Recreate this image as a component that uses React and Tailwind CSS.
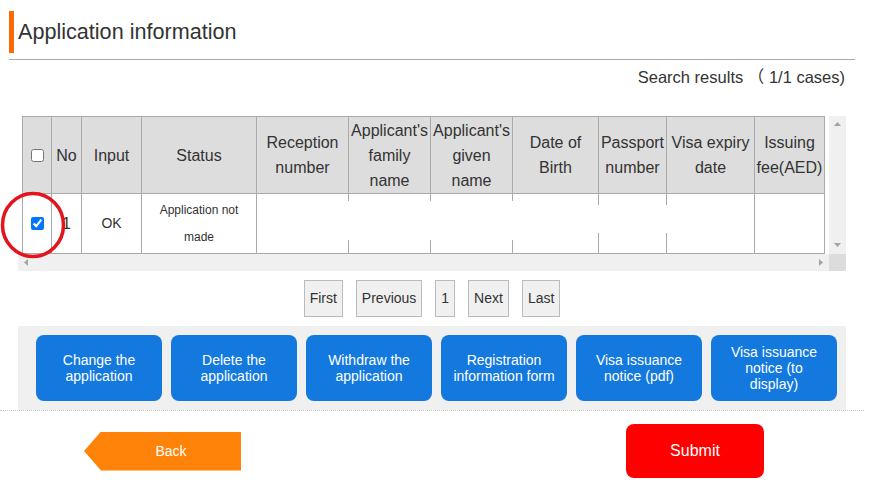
import React from "react";

const gridCls =
  "grid grid-cols-[29px_30px_60px_115px_92px_82px_82px_86px_68px_88px_71px] w-[804px]";

function HeadCell({ children, last }) {
  return (
    <div
      className={
        "border-l border-t border-[#aaa] bg-[#dddddd] h-[77px] flex items-center justify-center text-center text-[16px] leading-[25px] text-[#333] whitespace-nowrap overflow-hidden" +
        (last ? " border-r" : "")
      }
    >
      <div className="flex flex-col items-center">{children}</div>
    </div>
  );
}

function BodyCell({ children, kind = "full", last }) {
  if (kind === "full") {
    return (
      <div
        className={
          "border-l border-t border-b border-[#aaa] bg-white h-[61px] flex items-center justify-center text-center text-[#333]" +
          (last ? " border-r" : "")
        }
      >
        {children}
      </div>
    );
  }
  const top = kind === "a" ? "h-[7px]" : "h-[11px]";
  const bot = kind === "a" ? "h-[13px]" : "h-[20px]";
  return (
    <div className="border-t border-b border-[#aaa] bg-white h-[61px] flex">
      <div className="w-px flex flex-col justify-between">
        <div className={"w-px bg-[#aaa] " + top} />
        <div className={"w-px bg-[#aaa] " + bot} />
      </div>
      <div className="flex-1" />
    </div>
  );
}

function PageBtn({ children }) {
  return (
    <div className="h-[37px] px-[5px] border border-[#bbb] bg-[#f0f0f0] flex items-center text-[14px] text-[#333]">
      {children}
    </div>
  );
}

function BlueBtn({ children }) {
  return (
    <div className="w-[126px] h-[66px] rounded-[8px] bg-[#1379df] flex items-center justify-center text-center text-white text-[14px] leading-[16px] px-2">
      <div>{children}</div>
    </div>
  );
}

function Tri({ dir }) {
  const pts = {
    up: "0,4 3.5,0 7,4",
    down: "0,0 3.5,4 7,0",
    left: "4,0 0,3.5 4,7",
    right: "0,0 4,3.5 0,7",
  }[dir];
  const w = dir === "up" || dir === "down" ? 7 : 4;
  const h = dir === "up" || dir === "down" ? 4 : 7;
  return (
    <svg width={w} height={h} viewBox={`0 0 ${w} ${h}`}>
      <polygon points={pts} fill="#a3a3a3" />
    </svg>
  );
}

export default function App() {
  return (
    <div className="relative w-[886px] h-[492px] bg-white overflow-hidden font-['Liberation_Sans','Noto_Sans_CJK_JP',Arial,sans-serif] text-[#333]">
      {/* Header */}
      <div className="pt-[11px] pl-[9px]">
        <div className="h-[42px] border-l-[5px] border-[#ff6a00] pl-[4px] flex items-center text-[21.6px] text-[#333]">
          Application information
        </div>
        <div className="mt-[6px] h-px w-[846px] bg-[#aaa]" />
      </div>

      {/* Search results */}
      <div className="w-[845px] text-right text-[16.5px] leading-[18px] mt-[8px] whitespace-pre">
        {"Search results\u00a0（\u00a01/1 cases)"}
      </div>

      {/* Table scroll area */}
      <div className="ml-[18px] mt-[30px] w-[828px] flex flex-col">
        <div className="flex">
          <div className="w-[811px] h-[138px] pl-[4px] overflow-hidden">
            <div className={gridCls}>
              <HeadCell>
                <input type="checkbox" className="w-[13px] h-[13px]" readOnly />
              </HeadCell>
              <HeadCell>No</HeadCell>
              <HeadCell>Input</HeadCell>
              <HeadCell>Status</HeadCell>
              <HeadCell>
                <span>Reception</span>
                <span>number</span>
              </HeadCell>
              <HeadCell>
                <span>Applicant's</span>
                <span>family</span>
                <span>name</span>
              </HeadCell>
              <HeadCell>
                <span>Applicant's</span>
                <span>given</span>
                <span>name</span>
              </HeadCell>
              <HeadCell>
                <span>Date of</span>
                <span>Birth</span>
              </HeadCell>
              <HeadCell>
                <span>Passport</span>
                <span>number</span>
              </HeadCell>
              <HeadCell>
                <span>Visa expiry</span>
                <span>date</span>
              </HeadCell>
              <HeadCell last>
                <span>Issuing</span>
                <span>fee(AED)</span>
              </HeadCell>

              <BodyCell>
                <input type="checkbox" defaultChecked className="w-[13px] h-[13px]" />
              </BodyCell>
              <BodyCell>
                <span className="text-[16px]">1</span>
              </BodyCell>
              <BodyCell>
                <span className="text-[14px]">OK</span>
              </BodyCell>
              <BodyCell>
                <div className="text-[12px] leading-[27px]">
                  Application not
                  <br />
                  made
                </div>
              </BodyCell>
              <BodyCell />
              <BodyCell kind="a" />
              <BodyCell kind="a" />
              <BodyCell kind="a" />
              <BodyCell kind="b" />
              <BodyCell kind="b" />
              <BodyCell last />
            </div>
          </div>
          <div className="w-[17px] h-[138px] bg-[#f0f0f0] flex flex-col items-center justify-between pt-[6px] pb-[7px]">
            <Tri dir="up" />
            <Tri dir="down" />
          </div>
        </div>
        <div className="flex h-[17px]">
          <div className="w-[811px] bg-[#f0f0f0] flex items-center justify-between pl-[6px] pr-[6px]">
            <Tri dir="left" />
            <Tri dir="right" />
          </div>
          <div className="w-[17px] bg-[#dcdcdc]" />
        </div>
      </div>

      {/* Pagination */}
      <div className="ml-[18px] w-[828px] mt-[9px] flex justify-center gap-[13px]">
        <PageBtn>First</PageBtn>
        <PageBtn>Previous</PageBtn>
        <PageBtn>1</PageBtn>
        <PageBtn>Next</PageBtn>
        <PageBtn>Last</PageBtn>
      </div>

      {/* Action buttons */}
      <div className="w-[864px] mt-[9px] border-b border-dotted border-[#c8c8c8]">
        <div className="ml-[18px] w-[828px] bg-[#f0f0f0] pl-[18px] py-[9px] flex gap-[9px]">
          <BlueBtn>
            Change the
            <br />
            application
          </BlueBtn>
          <BlueBtn>
            Delete the
            <br />
            application
          </BlueBtn>
          <BlueBtn>
            Withdraw the
            <br />
            application
          </BlueBtn>
          <BlueBtn>
            Registration
            <br />
            information form
          </BlueBtn>
          <BlueBtn>
            Visa issuance
            <br />
            notice (pdf)
          </BlueBtn>
          <BlueBtn>
            Visa issuance
            <br />
            notice (to
            <br />
            display)
          </BlueBtn>
        </div>
      </div>

      {/* Bottom buttons */}
      <div className="mt-[13px] flex items-center">
        <div className="ml-[84px] w-[157px] h-[39px] bg-[#ff8308] [clip-path:polygon(17px_0,100%_0,100%_100%,17px_100%,0_50%)] pl-[17px] flex items-center justify-center text-white text-[14px]">
          Back
        </div>
        <div className="ml-[385px] w-[138px] h-[54px] rounded-[8px] bg-[#ff0000] flex items-center justify-center text-white text-[16px]">
          Submit
        </div>
      </div>

      {/* Red annotation circle */}
      <svg
        className="absolute left-0 top-[191px]"
        width="68"
        height="70"
        viewBox="0 0 68 70"
      >
        <ellipse cx="33" cy="34" rx="30.5" ry="31.5" fill="none" stroke="#e3141c" strokeWidth="3.5" />
      </svg>
    </div>
  );
}
